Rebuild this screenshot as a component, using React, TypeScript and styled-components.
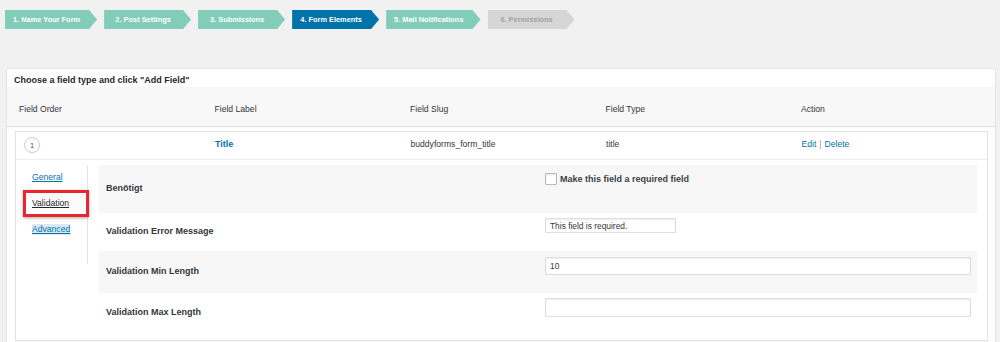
import styled, { createGlobalStyle } from "styled-components";

const GlobalStyle = createGlobalStyle`
  html, body {
    margin: 0;
    padding: 0;
    background: #f1f1f1;
    font-family: "Liberation Sans", Arial, sans-serif;
    color: #23282d;
  }
`;

const Page = styled.div`
  width: 1000px;
  height: 342px;
  overflow: hidden;
  padding-top: 10px;
  box-sizing: border-box;
`;

const Steps = styled.div`
  display: flex;
  gap: 7px;
  padding-left: 5px;
  height: 19px;
`;

const Step = styled.div<{ $state: "done" | "active" | "todo" }>`
  display: flex;
  align-items: center;
  justify-content: center;
  min-width: 87px;
  box-sizing: border-box;
  height: 19px;
  padding: 0 17px 0 8px;
  font-size: 7.4px;
  font-weight: bold;
  white-space: nowrap;
  clip-path: polygon(0 0, calc(100% - 8px) 0, 100% 50%, calc(100% - 8px) 100%, 0 100%);
  background: ${(p) =>
    p.$state === "active" ? "#0073aa" : p.$state === "done" ? "#82cdb9" : "#d6d6d6"};
  color: ${(p) => (p.$state === "todo" ? "#a2a2a2" : "#fff")};
`;

const Panel = styled.div`
  margin: 39px 4px 0 6px;
  background: #fff;
  border: 1px solid #e5e5e5;
  height: 300px;
`;

const PanelTitle = styled.div`
  height: 18px;
  box-sizing: border-box;
  padding: 6px 0 0 7px;
  line-height: 10px;
  font-size: 9px;
  font-weight: bold;
  color: #23282d;
`;

const HeadRow = styled.div`
  display: grid;
  grid-template-columns: repeat(5, 195.5px);
  height: 40px;
  box-sizing: border-box;
  padding-top: 4px;
  align-items: center;
  background: #f8f8f8;
  border-bottom: 1px solid #e1e1e1;
`;

const HeadCell = styled.div`
  padding-left: 12px;
  font-size: 8.6px;
  color: #32373c;
`;

const FieldBox = styled.div`
  margin: 4px 7px 0 8px;
  border: 1px solid #e3e3e3;
  box-shadow: 0 1px 1px rgba(0, 0, 0, 0.04);
  background: #fff;
`;

const FieldHead = styled.div`
  display: grid;
  grid-template-columns: 186px 195.5px 195.5px 195.5px 1fr;
  height: 28px;
  box-sizing: border-box;
  padding-bottom: 3px;
  align-items: center;
  border-bottom: 1px solid #eee;
`;

const FieldCell = styled.div<{ $pad?: number }>`
  padding-left: ${(p) => p.$pad ?? 13}px;
  font-size: 8.6px;
  color: #32373c;
`;

const OrderBadge = styled.span`
  display: inline-flex;
  align-items: center;
  justify-content: center;
  width: 14px;
  height: 14px;
  margin-top: 2px;
  border: 1px solid #ccc;
  border-radius: 50%;
  font-size: 7.5px;
  color: #555;
`;

const TitleLink = styled.a`
  font-size: 9px;
  font-weight: bold;
  color: #0073aa;
  text-decoration: none;
`;

const ActionLink = styled.a`
  color: #0073aa;
  text-decoration: none;
`;

const Sep = styled.span`
  color: #999;
  margin: 0 3px;
`;

const FieldBody = styled.div`
  display: grid;
  grid-template-columns: 72px 1fr;
  gap: 11px;
  padding: 5px 10px 6px 0;
`;

const Tabs = styled.div`
  position: relative;
  height: 99px;
  border-right: 1px solid #e5e5e5;
  display: flex;
  flex-direction: column;
  gap: 15px;
  padding: 7px 0 0 16px;
  box-sizing: border-box;
`;

const Tab = styled.a<{ $active?: boolean; $hl?: boolean }>`
  align-self: flex-start;
  font-size: 8.6px;
  line-height: 11px;
  text-decoration: underline;
  color: ${(p) => (p.$active ? "#23282d" : "#0073aa")};
  background: ${(p) => (p.$hl ? "#dbe9f4" : "transparent")};
  position: relative;
  z-index: 1;
`;

const Highlight = styled.div`
  position: absolute;
  left: 7px;
  top: 25px;
  width: 60px;
  height: 21px;
  border: 3px solid #e8262d;
  box-shadow: 0 1px 3px rgba(0, 0, 0, 0.35);
  background: #fbfbfb;
`;

const Options = styled.div`
  display: flex;
  flex-direction: column;
`;

const OptionRow = styled.div<{ $shade?: boolean; $h: number }>`
  display: grid;
  grid-template-columns: 446px 1fr;
  height: ${(p) => p.$h}px;
  background: ${(p) => (p.$shade ? "#f7f7f7" : "#fff")};
`;

const OptionLabel = styled.div`
  display: flex;
  align-items: center;
  padding: 0 0 3px 7px;
  font-size: 9px;
  font-weight: bold;
  color: #32373c;
`;

const OptionValue = styled.div<{ $top: number }>`
  padding: ${(p) => p.$top}px 6px 0 0;
`;

const CheckLine = styled.label`
  display: flex;
  align-items: center;
  gap: 3px;
  font-size: 9px;
  font-weight: bold;
  color: #3c4146;
`;

const Checkbox = styled.span`
  width: 10px;
  height: 10px;
  border: 1px solid #b4b9be;
  background: #fff;
  border-radius: 1px;
  box-shadow: inset 0 1px 2px rgba(0, 0, 0, 0.1);
`;

const Input = styled.div<{ $w?: number; $h: number }>`
  width: ${(p) => (p.$w ? `${p.$w}px` : "100%")};
  height: ${(p) => p.$h}px;
  box-sizing: border-box;
  border: 1px solid #ddd;
  border-radius: 1px;
  box-shadow: inset 0 1px 2px rgba(0, 0, 0, 0.07);
  background: #fff;
  display: flex;
  align-items: center;
  padding-left: 4px;
  font-size: 8.4px;
  color: #32373c;
`;

const steps: { label: string; state: "done" | "active" | "todo" }[] = [
  { label: "1. Name Your Form", state: "done" },
  { label: "2. Post Settings", state: "done" },
  { label: "3. Submissions", state: "done" },
  { label: "4. Form Elements", state: "active" },
  { label: "5. Mail Notifications", state: "done" },
  { label: "6. Permissions", state: "todo" },
];

const App = () => {
  return (
    <Page>
      <GlobalStyle />
      <Steps>
        {steps.map((s) => (
          <Step key={s.label} $state={s.state}>
            {s.label}
          </Step>
        ))}
      </Steps>
      <Panel>
        <PanelTitle>Choose a field type and click "Add Field"</PanelTitle>
        <HeadRow>
          <HeadCell>Field Order</HeadCell>
          <HeadCell>Field Label</HeadCell>
          <HeadCell>Field Slug</HeadCell>
          <HeadCell>Field Type</HeadCell>
          <HeadCell>Action</HeadCell>
        </HeadRow>
        <FieldBox>
          <FieldHead>
            <FieldCell $pad={8}>
              <OrderBadge>1</OrderBadge>
            </FieldCell>
            <FieldCell>
              <TitleLink>Title</TitleLink>
            </FieldCell>
            <FieldCell>buddyforms_form_title</FieldCell>
            <FieldCell>title</FieldCell>
            <FieldCell>
              <ActionLink>Edit</ActionLink>
              <Sep>|</Sep>
              <ActionLink>Delete</ActionLink>
            </FieldCell>
          </FieldHead>
          <FieldBody>
            <Tabs>
              <Highlight />
              <Tab>General</Tab>
              <Tab $active>Validation</Tab>
              <Tab $hl>Advanced</Tab>
            </Tabs>
            <Options>
              <OptionRow $shade $h={48}>
                <OptionLabel>Benötigt</OptionLabel>
                <OptionValue $top={8}>
                  <CheckLine>
                    <Checkbox />
                    Make this field a required field
                  </CheckLine>
                </OptionValue>
              </OptionRow>
              <OptionRow $h={38}>
                <OptionLabel>Validation Error Message</OptionLabel>
                <OptionValue $top={5}>
                  <Input $w={131} $h={15}>
                    This field is required.
                  </Input>
                </OptionValue>
              </OptionRow>
              <OptionRow $shade $h={42}>
                <OptionLabel>Validation Min Length</OptionLabel>
                <OptionValue $top={6}>
                  <Input $h={18}>10</Input>
                </OptionValue>
              </OptionRow>
              <OptionRow $h={41}>
                <OptionLabel>Validation Max Length</OptionLabel>
                <OptionValue $top={5}>
                  <Input $h={19} />
                </OptionValue>
              </OptionRow>
            </Options>
          </FieldBody>
        </FieldBox>
      </Panel>
    </Page>
  );
};

export default App;
